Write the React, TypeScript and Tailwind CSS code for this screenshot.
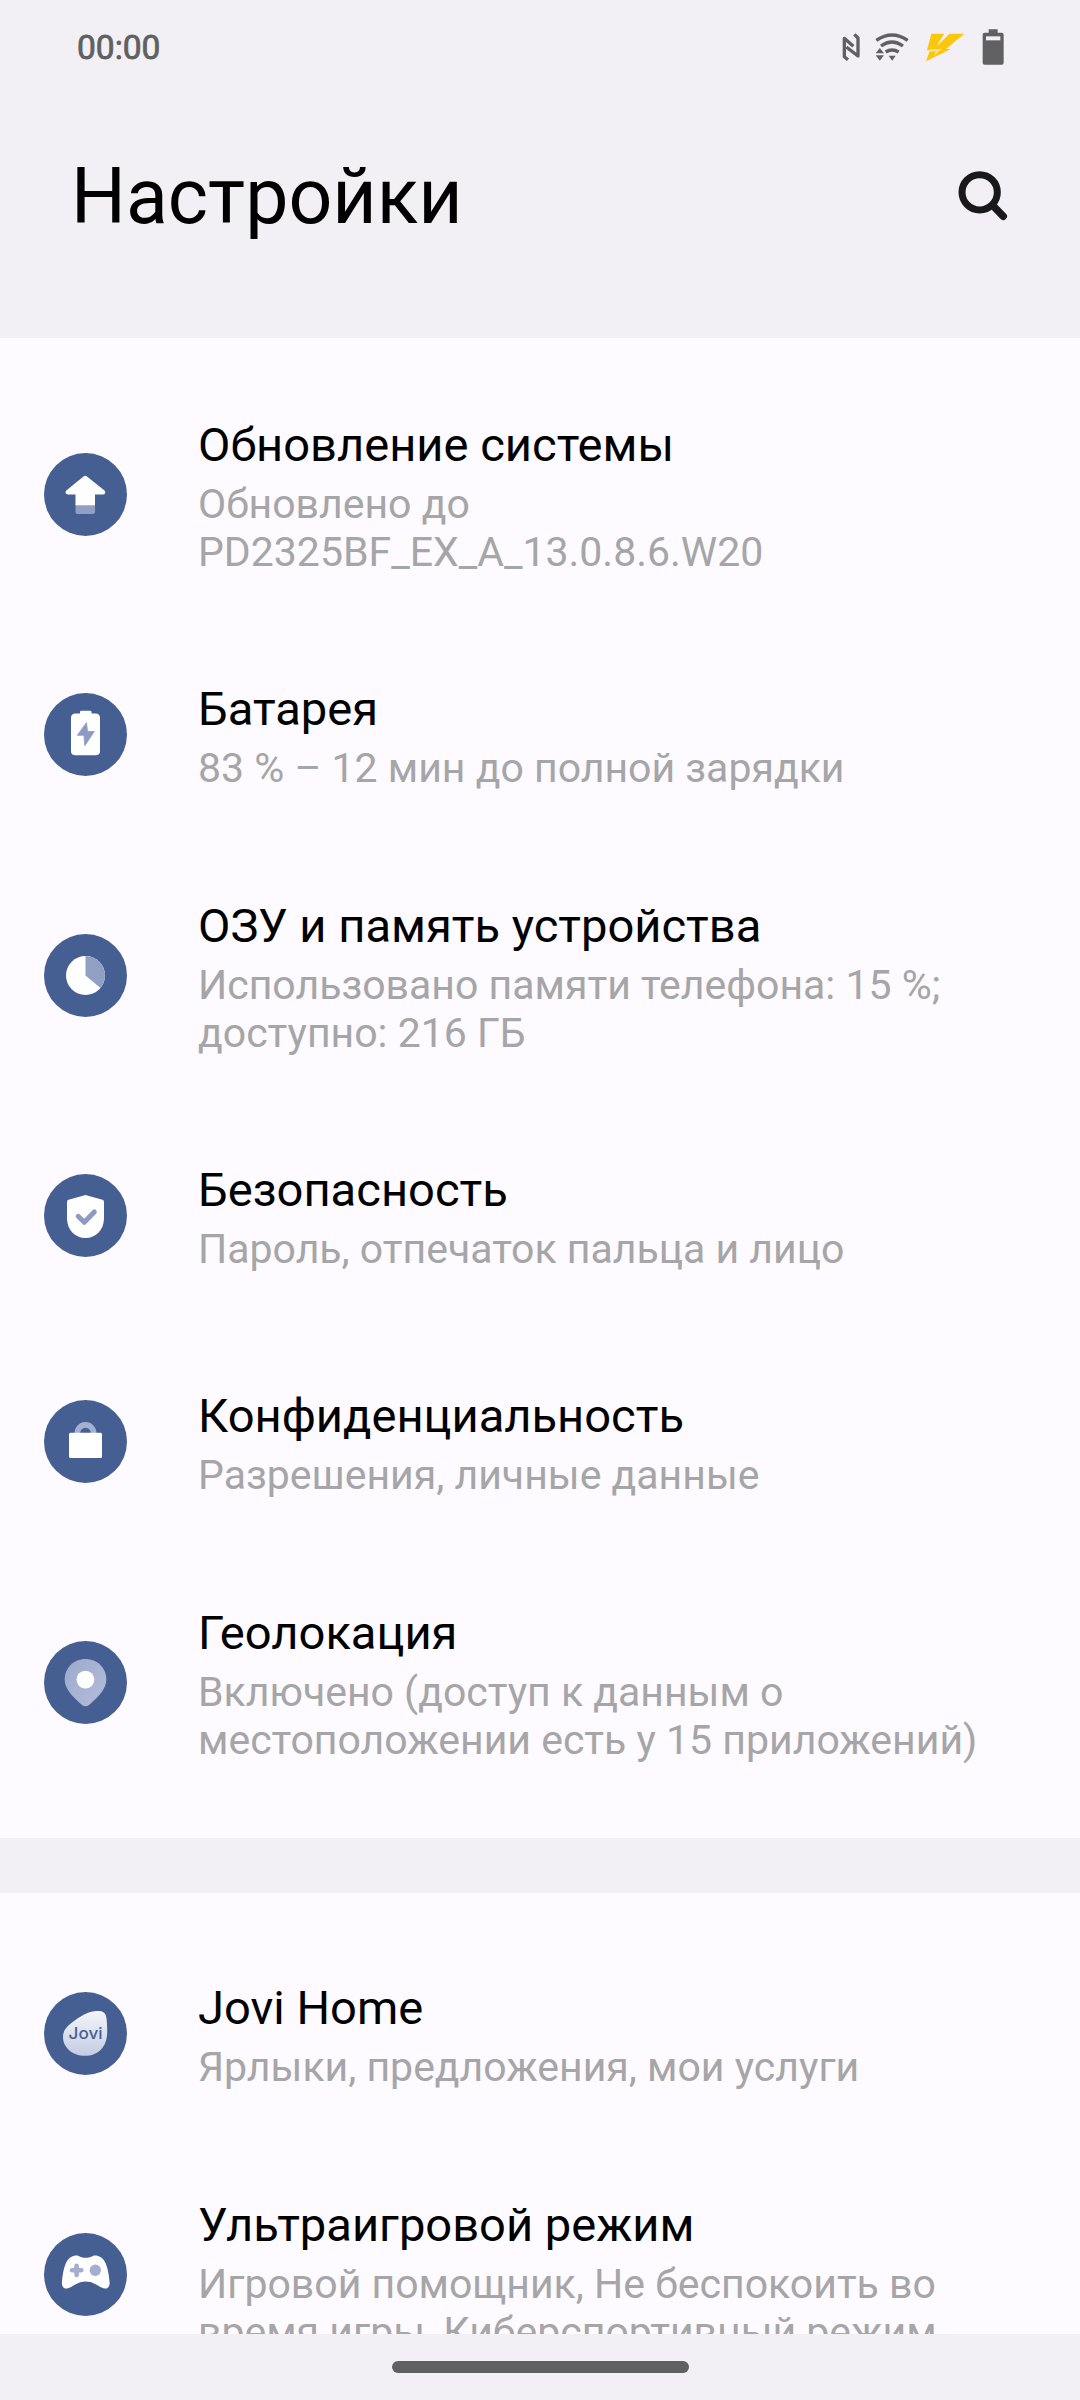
import type { ReactNode } from 'react'

interface SettingItem {
  title: string
  lines: string[]
  icon: ReactNode
}

function NfcIcon() {
  return (
    <svg className="w-[18px] h-7" viewBox="64 67 54 84" fill="none" stroke="#606063" strokeWidth={10} strokeLinejoin="round" strokeLinecap="butt">
      <path d="M82 147 L71 138 V83 L98 107" />
      <path d="M101 71 L112 82 V136 L77 109" />
    </svg>
  )
}

function WifiIcon() {
  return (
    <svg className="w-[34px] h-7" viewBox="163 67 102 84" fill="none" stroke="#606063" strokeWidth={10}>
      <path d="M167 89 Q214 57 261 89" />
      <path d="M181 106 Q214 82 247 106" />
      <path d="M195 124 Q214 112 234 124" />
      <path d="M204 135 H225 L214.500 150 Z M165 128 L177.500 112 L190 128 Z M165 134 H190 L177.500 150 Z" fill="#606063" stroke="none" />
    </svg>
  )
}

function ChargeIcon() {
  return (
    <svg className="w-10 h-[29px]" viewBox="314 64 120 87">
      <path d="M333 66 H372 L352 98 L387 66 H432 L377 112 H392 L317 149 L329 116 H320 Z" fill="#fcc60b" />
      <path d="M372 66 H387 L350 103 L361 84 Z" fill="#f2f0f5" />
      <path d="M330 113 L366 112 L357 117 L341 134 L346 118 L327 120 Z" fill="#f2f0f5" opacity={0.65} />
    </svg>
  )
}

function BatteryStatusIcon() {
  return (
    <svg className="w-[22px] h-9" viewBox="484 54 66 108">
      <path d="M504 55 H531 V65 H543 Q549 65 549 71 V155 Q549 161 543 161 H492 Q486 161 486 155 V71 Q486 65 492 65 H504 Z" fill="#606063" />
      <rect x="496" y="76" width="43" height="12" fill="#f2f0f5" />
    </svg>
  )
}

function SearchIcon() {
  return (
    <svg className="w-[50px] h-[51px]" viewBox="84 60 150 153" fill="none" stroke="#19191c">
      <circle cx="149" cy="127" r="53" strokeWidth={21} />
      <path d="M188 166 L220 199" strokeWidth={22} strokeLinecap="round" />
    </svg>
  )
}

const updateIcon = (
  <>
    <path d="M31.500 50 H51 V59 Q51 61 49 61 H33.500 Q31.500 61 31.500 59 Z" fill="#919fc4" />
    <path d="M39.500 23.400 Q41.300 22 43 23.400 L60.500 37.400 Q62 39 61 40.500 Q60.500 41.400 59 41.400 H51 V52.300 H31.500 V41.400 H24 Q22.300 41.400 21.700 40.300 Q21 38.800 22.300 37.400 Z" fill="#fff" />
  </>
)

const batteryIcon = (
  <>
    <path d="M36 20.500 V19 Q36 17.700 37.500 17.700 H46 Q47.500 17.700 47.500 19 V20.500 H51.500 Q56 20.500 56 25 V58 Q56 62.300 51.500 62.300 H31.500 Q27 62.300 27 58 V25 Q27 20.500 31.500 20.500 Z" fill="#fff" />
    <path d="M42.500 29.500 L33.300 42.300 H40 L40.800 52.700 L50.300 38.500 H43.500 Z" fill="#8c9bc1" stroke="#8c9bc1" strokeLinejoin="round" strokeWidth={0.8} />
  </>
)

const storageIcon = (
  <>
    <circle cx="41.500" cy="41.500" r="19.500" fill="#fff" />
    <path d="M41.500 41.500 V22 A19.500 19.500 0 0 1 56.500 54 Z" fill="#919fc4" />
  </>
)

const shieldIcon = (
  <>
    <path d="M39.800 21.500 Q41.500 20.700 43.200 21.500 L58.500 25.800 Q60 26.300 60 28 V44 C60 56 52 64 41.500 64 C31 64 23 56 23 44 V28 Q23 26.300 24.500 25.800 Z" fill="#fff" />
    <path d="M34.200 42.300 L40.300 48.300 L50.300 38" fill="none" stroke="#8c9bc1" strokeWidth={5} strokeLinecap="round" strokeLinejoin="round" />
  </>
)

const privacyIcon = (
  <>
    <circle cx="41.500" cy="33" r="8.100" fill="none" stroke="#a3b0d0" strokeWidth={5.6} />
    <rect x="25" y="32.700" width="33" height="25.400" rx="1.500" fill="#fff" />
  </>
)

const locationIcon = (
  <>
    <defs>
      <linearGradient id="pin" x1="0" y1="0" x2="1" y2="1">
        <stop offset="0" stopColor="#9caacb" />
        <stop offset="1" stopColor="#b4bdda" />
      </linearGradient>
    </defs>
    <path d="M41.500 18 C53.500 18 62.300 27 62.300 38.500 C62.300 48.500 54 56 45 64 Q41.500 66.600 38 64 C29 56 20.700 48.500 20.700 38.500 C20.700 27 29.500 18 41.500 18 Z" fill="url(#pin)" />
    <circle cx="41.400" cy="38.600" r="8.900" fill="#fff" />
  </>
)

const joviIcon = (
  <>
    <defs>
      <linearGradient id="jovi" x1="0" y1="0" x2="0" y2="1">
        <stop offset="0" stopColor="#f4f6fb" />
        <stop offset="1" stopColor="#c3cce2" />
      </linearGradient>
    </defs>
    <path d="M52 19 C58 18.500 61 20 62 24 C63 28 63.200 34 63.200 40 C63.200 55 54 63.800 41 63.800 C28 63.800 19 55 19 45 C19 39 22 35 28 30.500 C35 25 43 19.800 52 19 Z" fill="url(#jovi)" />
    <text x="24.600" y="47.300" fontFamily="Inter, sans-serif" fontSize="15.500" fontWeight="500" textLength="34" lengthAdjust="spacingAndGlyphs" fill="#465f93">Jovi</text>
  </>
)

const gameIcon = (
  <>
    <path d="M31 22.500 C35 22 36 24.700 41.700 24.700 C47.500 24.700 48.500 22 52.500 22.500 C61 24 64 33 65.600 49 C66.200 55 62 57 57.500 54.500 C52 51.500 48 48.500 41.700 48.500 C35.500 48.500 31.500 51.500 26 54.500 C21.500 57 17.300 55 17.900 49 C19.500 33 22.500 24 31 22.500 Z" fill="#fff" />
    <path d="M32.600 32.700 V42 M28 37.300 H37.300" stroke="#a3aed0" strokeWidth={4.6} strokeLinecap="round" />
    <circle cx="51.300" cy="37.300" r="5.700" fill="#a3aed0" />
  </>
)

const deviceItems: SettingItem[] = [
  { title: 'Обновление системы', lines: ['Обновлено до', 'PD2325BF_EX_A_13.0.8.6.W20'], icon: updateIcon },
  { title: 'Батарея', lines: ['83 % – 12 мин до полной зарядки'], icon: batteryIcon },
  { title: 'ОЗУ и память устройства', lines: ['Использовано памяти телефона: 15 %;', 'доступно: 216 ГБ'], icon: storageIcon },
  { title: 'Безопасность', lines: ['Пароль, отпечаток пальца и лицо'], icon: shieldIcon },
  { title: 'Конфиденциальность', lines: ['Разрешения, личные данные'], icon: privacyIcon },
  { title: 'Геолокация', lines: ['Включено (доступ к данным о', 'местоположении есть у 15 приложений)'], icon: locationIcon },
]

const serviceItems: SettingItem[] = [
  { title: 'Jovi Home', lines: ['Ярлыки, предложения, мои услуги'], icon: joviIcon },
  { title: 'Ультраигровой режим', lines: ['Игровой помощник, Не беспокоить во', 'время игры, Киберспортивный режим'], icon: gameIcon },
]

function SettingRow({ title, lines, icon }: SettingItem) {
  const twoLines = lines.length > 1

  return (
    <div className={twoLines ? 'flex items-center h-[255px] shrink-0 pl-11' : 'flex items-center h-[226px] shrink-0 pl-11'}>
      <svg className={twoLines ? 'w-[83px] h-[83px] shrink-0' : 'w-[83px] h-[83px] shrink-0 mb-px'} viewBox="0 0 83 83">
        <circle cx="41.500" cy="41.500" r="41.500" fill="#465f93" />
        {icon}
      </svg>
      <div className="ml-[71px] pb-px whitespace-nowrap">
        <div className="mb-[3px] text-[47.1px] leading-[64px] text-black">{title}</div>
        {lines.map((line) => (
          <div key={line} className="text-[41px] leading-[48px] text-[#a6a5a8]">
            {line}
          </div>
        ))}
      </div>
    </div>
  )
}

export default function App() {
  return (
    <div className="flex flex-col w-[1080px] h-[2400px] overflow-hidden bg-[#f2f0f5] font-['Roboto',sans-serif]">
      <div className="flex items-center justify-between h-[94px] shrink-0 pl-[77px] pr-[76px]">
        <span className="pt-0.5 text-[33.5px] text-[#606063] [-webkit-text-stroke:0.8px_#606063]">00:00</span>
        <div className="flex items-center">
          <NfcIcon />
          <div className="ml-[15px]"><WifiIcon /></div>
          <div className="ml-4"><ChargeIcon /></div>
          <div className="ml-[17px]"><BatteryStatusIcon /></div>
        </div>
      </div>

      <header className="flex items-center justify-between h-[244px] shrink-0 pl-[71px] pr-[72px] pb-[42px]">
        <h1 className="pt-1 text-[77px] leading-[90px] text-black">Настройки</h1>
        <SearchIcon />
      </header>

      <section className="flex flex-col h-[1500px] shrink-0 pt-[29px] bg-[#fdfbff]">
        {deviceItems.map((item) => (
          <SettingRow key={item.title} {...item} />
        ))}
      </section>

      <section className="flex flex-col h-[441px] shrink-0 mt-[55px] pt-7 bg-[#fdfbff] overflow-hidden">
        {serviceItems.map((item) => (
          <SettingRow key={item.title} {...item} />
        ))}
      </section>

      {/* Gesture bar */}
      <div className="flex justify-center h-[66px] shrink-0 pt-[27px]">
        <div className="w-[297px] h-3 rounded-full bg-[#606063]" />
      </div>
    </div>
  )
}
